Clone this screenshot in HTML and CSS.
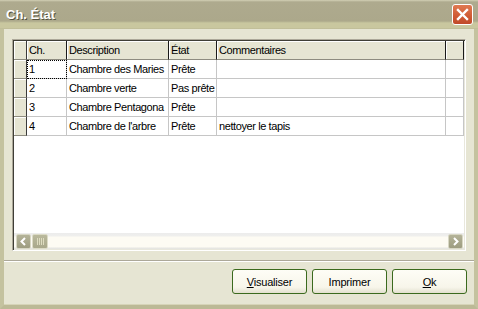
FILE: index.html
```html
<!DOCTYPE html>
<html lang="fr">
<head>
    <meta charset="UTF-8">
    <title>Ch. État</title>
    <link rel="stylesheet" href="styles.css">
</head>
<body>
    <div class="window">
        <div class="titlebar">
            <span class="title">Ch. État</span>
            <span class="close">
                <svg width="19" height="19" viewBox="0 0 19 19"><path d="M5 5 L14 14 M14 5 L5 14" stroke="#fff" stroke-width="2.4" stroke-linecap="square"/></svg>
            </span>
        </div>

        <div class="body">
            <div class="grid-panel">
                <div class="grid">
                    <div class="hd ind"></div>
                    <div class="hd">Ch.</div>
                    <div class="hd">Description</div>
                    <div class="hd">État</div>
                    <div class="hd">Commentaires</div>
                    <div class="hd"></div>

                    <div class="ind"></div>
                    <div class="cell focus">1</div>
                    <div class="cell">Chambre des Maries</div>
                    <div class="cell">Prête</div>
                    <div class="cell"></div>
                    <div class="cell last"></div>

                    <div class="ind"></div>
                    <div class="cell">2</div>
                    <div class="cell">Chambre verte</div>
                    <div class="cell">Pas prête</div>
                    <div class="cell"></div>
                    <div class="cell last"></div>

                    <div class="ind"></div>
                    <div class="cell">3</div>
                    <div class="cell">Chambre Pentagona</div>
                    <div class="cell">Prête</div>
                    <div class="cell"></div>
                    <div class="cell last"></div>

                    <div class="ind"></div>
                    <div class="cell">4</div>
                    <div class="cell">Chambre de l'arbre</div>
                    <div class="cell">Prête</div>
                    <div class="cell">nettoyer le tapis</div>
                    <div class="cell last"></div>
                </div>

                <div class="hscroll">
                    <span class="arrow">
                        <svg width="13" height="13" viewBox="0 0 13 13"><path d="M8 3 L4.5 6.5 L8 10" stroke="#fff" stroke-width="2" fill="none"/></svg>
                    </span>
                    <span class="thumb"><i></i><i></i><i></i><i></i></span>
                    <span class="track"></span>
                    <span class="arrow">
                        <svg width="13" height="13" viewBox="0 0 13 13"><path d="M5 3 L8.5 6.5 L5 10" stroke="#fff" stroke-width="2" fill="none"/></svg>
                    </span>
                </div>
            </div>

            <div class="separator"></div>

            <div class="buttons">
                <button class="btn"><u>V</u>isualiser</button>
                <button class="btn">Imprimer</button>
                <button class="btn"><u>O</u>k</button>
            </div>
        </div>
    </div>
</body>
</html>
```

FILE: styles.css
```css
body {
    margin: 0;
    font-family: "Liberation Sans", Arial, sans-serif;
    font-size: 11px;
}
.window {
    width: 478px;
    height: 309px;
    display: flex;
    flex-direction: column;
    box-sizing: border-box;
    background: #b9b693;
}
.titlebar {
    height: 29px;
    flex-shrink: 0;
    display: flex;
    align-items: flex-start;
    justify-content: space-between;
    background: linear-gradient(#d3d0b5 0, #aeaa8e 2px, #aca88b 21px, #c9c79f 23px, #c9c79f 28px, #b9b694 29px);
}
.title {
    margin: 7px 0 0 6px;
    color: #fff;
    font-size: 13px;
    font-weight: bold;
    text-shadow: 1px 1px 0 #55533f;
}
.close {
    margin: 4px 5px 0 0;
    width: 19px;
    height: 19px;
    border: 1px solid #fff;
    border-radius: 3px;
    background: linear-gradient(#e07a52, #cf5a33 60%, #c0492a);
    display: flex;
}
.body {
    flex: 1;
    display: flex;
    flex-direction: column;
    background: #e6e5d3;
    border-left: 4px solid #c4c29f;
    border-right: 4px solid #c4c29f;
    border-bottom: 4px solid #bcb996;
    box-shadow: inset 0 -1px 0 #d6d4b8;
}
.grid-panel {
    margin: 10px 8px 0 8px;
    height: 212px;
    box-sizing: border-box;
    display: flex;
    flex-direction: column;
    border-top: 1px solid #aca899;
    border-left: 1px solid #aca899;
    border-right: 1px solid #fff;
    border-bottom: 1px solid #fff;
    box-shadow: inset 1px 1px 0 #3f3e36, inset -1px -1px 0 #e8e7dc;
    padding: 1px;
}
.grid {
    flex: 1;
    background: #fff;
    display: grid;
    grid-template-columns: 13px 40px 102px 48px 229px 18px;
    grid-auto-rows: 19px;
    align-content: start;
    letter-spacing: -0.4px;
}
.grid > div {
    box-sizing: border-box;
    white-space: nowrap;
    overflow: hidden;
    line-height: 18px;
    padding-left: 2px;
}
.hd {
    background: #e6e5d3;
    border-right: 1px solid #1a1a1a;
    border-bottom: 1px solid #8e8c80;
    box-shadow: inset 1px 1px 0 #fff;
}
.ind {
    background: #e6e5d3;
    border-right: 1px solid #3a3a3a;
    border-bottom: 1px solid #8e8c80;
    box-shadow: inset 1px 1px 0 #fff;
}
.cell {
    border-right: 1px solid #c6c6c6;
    border-bottom: 1px solid #c6c6c6;
}
.focus {
    outline: 1px dotted #000;
    outline-offset: -1px;
}
.hscroll {
    height: 16px;
    flex-shrink: 0;
    display: flex;
    align-items: flex-start;
    padding: 1px 1px 0 2px;
    box-sizing: border-box;
    background: linear-gradient(#ececec 0, #efefed 3px, #fdfbf3 4px, #fdfbf3 14px, #e6e6e2 15px);
}
.arrow {
    width: 13px;
    height: 13px;
    border: 1px solid #d8d7c4;
    border-radius: 2px;
    background: linear-gradient(#b4b398, #9e9d81);
    display: flex;
}
.thumb {
    margin-left: 1px;
    width: 14px;
    height: 13px;
    border: 1px solid #dcdbc6;
    border-radius: 2px;
    background: linear-gradient(#bab99c, #a9a88b);
    display: flex;
    justify-content: center;
    align-items: center;
    gap: 1px;
}
.thumb i {
    width: 1px;
    height: 7px;
    background: #dedcc0;
}
.track {
    flex: 1;
}
.separator {
    margin-top: 9px;
    height: 1px;
    background: #aca899;
    border-bottom: 1px solid #fff;
}
.buttons {
    margin: 7px 7px 0 0;
    display: flex;
    justify-content: flex-end;
    gap: 5px;
}
.btn {
    width: 75px;
    height: 25px;
    padding: 0;
    border: 1px solid #3b6a1e;
    border-radius: 3px;
    background: linear-gradient(#fefdf6, #f7f5ea 75%, #e3e0cf);
    font-family: "Liberation Sans", Arial, sans-serif;
    font-size: 11px;
    letter-spacing: -0.2px;
    color: #000;
}
```
